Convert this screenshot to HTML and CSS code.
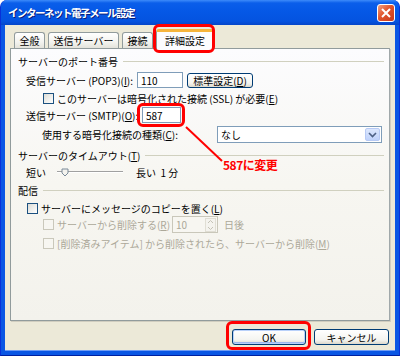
FILE: index.html
```html
<!doctype html>
<html>
    <head>
        <meta charset=utf-8>
        <title>インターネット電子メール設定</title>
        <link rel="stylesheet" href="styles.css">
    </head>
    <body>
        <div class="window">
            <div class="titlebar">
                <span class="title">インターネット電子メール設定</span>
                <span class="close">
                    <svg width="10" height="10" viewBox="0 0 10 10"><path d="M1 1L9 9M9 1L1 9" stroke="#fff" stroke-width="2"/></svg>
                </span>
            </div>

            <div class="client">
                <div class="tabs">
                    <span class="tab t-general">全般</span>
                    <span class="tab t-send">送信サーバー</span>
                    <span class="tab t-conn">接続</span>
                    <span class="tab t-adv active mark">詳細設定</span>
                </div>

                <div class="panel">
                    <div class="group g-port"><span>サーバーのポート番号</span></div>

                    <div class="row r-pop">
                        <label class="lbl l-pop">受信サーバー (POP3)(<u>I</u>):</label>
                        <span class="field f-pop">110</span>
                        <span class="btn b-std">標準設定(<u>D</u>)</span>
                    </div>

                    <div class="row r-ssl">
                        <span class="cb"></span>
                        <label>このサーバーは暗号化された接続 (SSL) が必要(<u>E</u>)</label>
                    </div>

                    <div class="row r-smtp">
                        <label class="lbl l-smtp">送信サーバー (SMTP)(<u>O</u>):</label>
                        <span class="field f-smtp mark">587</span>
                    </div>

                    <div class="row r-enc">
                        <label class="lbl l-enc">使用する暗号化接続の種類(<u>C</u>):</label>
                        <span class="select">
                            <span>なし</span>
                            <span class="drop">
                                <svg width="9" height="6" viewBox="0 0 9 6"><path d="M1 1L4.5 4.5L8 1" fill="none" stroke="#4D6185" stroke-width="1.6"/></svg>
                            </span>
                        </span>
                    </div>

                    <div class="group g-time"><span>サーバーのタイムアウト(<u>T</u>)</span></div>

                    <div class="row r-slider">
                        <span class="short">短い</span>
                        <svg class="slider" width="66" height="10" viewBox="0 0 66 10">
                            <line x1="0" y1="4.5" x2="66" y2="4.5" stroke="#A0A0A0"/>
                            <line x1="0" y1="5.5" x2="66" y2="5.5" stroke="#FFFFFF"/>
                            <path d="M5 2H11V6L8 9L5 6Z" fill="#F4F3EE" stroke="#7A8A99"/>
                        </svg>
                        <span class="long">長い&nbsp; 1 分</span>
                    </div>

                    <div class="group g-deliv"><span>配信</span></div>

                    <div class="row r-copy">
                        <span class="cb"></span>
                        <label>サーバーにメッセージのコピーを置く(<u>L</u>)</label>
                    </div>

                    <div class="row r-del disabled">
                        <span class="cb"></span>
                        <label class="l-del">サーバーから削除する(<u>R</u>)</label>
                        <span class="spin">
                            <span>10</span>
                            <span class="arrows">
                                <svg width="9" height="14" viewBox="0 0 9 14"><path d="M2 5L4.5 2.5L7 5M2 9L4.5 11.5L7 9" fill="none" stroke="#C4C2B6"/></svg>
                            </span>
                        </span>
                        <span class="days">日後</span>
                    </div>

                    <div class="row r-trash disabled">
                        <span class="cb"></span>
                        <label>[削除済みアイテム] から削除されたら、サーバーから削除(<u>M</u>)</label>
                    </div>
                </div>

                <div class="buttons">
                    <span class="btn b-ok mark">OK</span>
                    <span class="btn b-cancel">キャンセル</span>
                </div>
            </div>

            <svg class="pointer" width="400" height="356" viewBox="0 0 400 356">
                <line x1="185" y1="127" x2="221" y2="161" stroke="#FF0000" stroke-width="2"/>
            </svg>
            <span class="note">587に変更</span>
        </div>
    </body>
</html>
```

FILE: styles.css
```css
* {
    box-sizing: border-box;
}

body {
    margin: 0;
    font-family: "Noto Sans CJK JP", "Noto Sans", sans-serif;
    font-size: 10px;
    color: #000;
    background: #fff;
}

u {
    text-decoration: underline;
}

.window {
    position: relative;
    width: 400px;
    height: 356px;
    display: flex;
    flex-direction: column;
    padding: 0 4px 4px;
    background: #0A56E4;
    border-left: 1px solid #0831D9;
    border-right: 1px solid #0831D9;
    border-bottom: 1px solid #0020A0;
    border-radius: 7px 7px 0 0;
    overflow: hidden;
}

.titlebar {
    height: 25px;
    display: flex;
    align-items: center;
    justify-content: space-between;
    margin: 0 -4px;
    padding: 0 4px 0 7px;
    background: linear-gradient(#3D8BFA, #0A5EEA 12%, #0558E6 45%, #0453E0 85%, #0546C8);
}

.title {
    color: #fff;
    font-weight: bold;
    font-size: 10.5px;
    letter-spacing: -1.5px;
    text-shadow: 1px 1px 0 #0A1E7A;
}

.close {
    width: 18px;
    height: 18px;
    display: flex;
    align-items: center;
    justify-content: center;
    margin-top: 1px;
    border: 1px solid #fff;
    border-radius: 3px;
    background: linear-gradient(135deg, #F0A080, #E0542C 45%, #C8381A);
}

.client {
    flex: 1;
    display: flex;
    flex-direction: column;
    padding: 0 5px 0 5px;
    background: #ECE9D8;
    border-bottom: 1px solid #6F9CF5;
}

/* tabs */
.tabs {
    height: 23px;
    display: flex;
    align-items: flex-end;
    padding-left: 4px;
}

.tab {
    height: 16px;
    margin-right: 3px;
    display: flex;
    align-items: center;
    justify-content: center;
    border: 1px solid #919B9C;
    border-bottom: none;
    border-radius: 3px 3px 0 0;
    background: linear-gradient(#FFFFFF, #F3F3EF 60%, #E4E3DB);
}

.t-general { width: 31px; }
.t-send { width: 71px; }
.t-conn { width: 31px; }

.tab.active {
    width: 58px;
    height: 20px;
    margin-bottom: -1px;
    margin-left: 0;
    position: relative;
    z-index: 1;
    border-top: 3px solid #F7B53C;
    background: #FCFCFE;
}

.panel {
    height: 273px;
    border: 1px solid #919B9C;
    border-right-color: #A0A8AA;
    background: linear-gradient(#FCFCFE, #F7F6F1 50%, #F3F2EC);
    box-shadow: 1px 1px 0 #D0CDBF;
}

/* red marks */
.mark {
    position: relative;
}

.mark::after {
    content: "";
    position: absolute;
    border: 3px solid #FF0000;
    border-radius: 6px;
}

.tab.mark::after {
    top: -8px;
    right: -2px;
    bottom: -4px;
    left: -4px;
}

.f-smtp.mark::after {
    top: -5px;
    right: -5px;
    bottom: -5px;
    left: -6px;
}

.b-ok.mark::after {
    top: -9px;
    right: -6px;
    bottom: -6px;
    left: -7px;
}

/* rows */
.group {
    height: 14px;
    display: flex;
    align-items: center;
    padding: 0 5px 0 7px;
}

.group::after {
    content: "";
    flex: 1;
    margin-left: 5px;
    border-top: 1px solid #D0D0BF;
}

.row {
    display: flex;
    align-items: center;
}

.g-port { margin-top: 5px; }

.r-pop {
    height: 16px;
    margin-top: 4px;
    padding-left: 15px;
}

.lbl {
    flex-shrink: 0;
    white-space: nowrap;
}

.l-pop { width: 111px; }
.l-smtp { width: 116px; }
.l-enc { width: 175px; }

.field {
    height: 16px;
    display: flex;
    align-items: center;
    padding-left: 3px;
    border: 1px solid #7F9DB9;
    background: #fff;
}

.f-pop { width: 46px; }
.f-smtp { width: 39px; }

.btn {
    display: flex;
    align-items: center;
    justify-content: center;
    border: 1px solid #003C74;
    border-radius: 3px;
    background: linear-gradient(#FFFFFF, #F4F4F0 70%, #DCD8CC);
}

.b-std {
    width: 66px;
    height: 15px;
    margin-left: 4px;
}

.r-ssl {
    height: 14px;
    margin-top: 3px;
    padding-left: 32px;
}

.cb {
    width: 11px;
    height: 11px;
    margin-right: 3px;
    border: 1px solid #1C5180;
    background: linear-gradient(135deg, #DCDCD6, #FFFFFF);
}

.r-smtp {
    height: 16px;
    margin-top: 2px;
    padding-left: 15px;
}

.r-enc {
    height: 17px;
    margin-top: 3px;
    padding-left: 31px;
}

.select {
    width: 165px;
    height: 17px;
    display: flex;
    align-items: center;
    justify-content: space-between;
    padding: 0 1px 0 3px;
    border: 1px solid #7F9DB9;
    background: #fff;
}

.drop {
    width: 15px;
    height: 13px;
    display: flex;
    align-items: center;
    justify-content: center;
    border: 1px solid #B7CAF5;
    border-radius: 2px;
    background: linear-gradient(#DCE7FD, #BFD2FB);
}

.g-time { margin-top: 5px; }

.r-slider {
    height: 14px;
    margin-top: 3px;
    padding-left: 15px;
}

.short { width: 31px; }

.slider {
    margin-right: 13px;
}

.g-deliv { margin-top: 4px; }

.r-copy {
    height: 14px;
    margin-top: 4px;
    padding-left: 16px;
}

.disabled {
    color: #ACA899;
}

.disabled .cb {
    border-color: #CAC8BB;
    background: #F7F6F1;
}

.r-del {
    height: 17px;
    margin-top: 1px;
    padding-left: 32px;
}

.l-del { width: 115px; }

.spin {
    width: 46px;
    height: 17px;
    display: flex;
    align-items: center;
    justify-content: space-between;
    padding: 0 1px 0 3px;
    border: 1px solid #C9C7BA;
    background: #F7F6F1;
}

.arrows {
    width: 11px;
    height: 14px;
    display: flex;
    align-items: center;
    justify-content: center;
    border: 1px solid #E0DED4;
    background: #F4F3EE;
}

.days { margin-left: 6px; }

.r-trash {
    height: 14px;
    margin-top: 3px;
    padding-left: 32px;
}

/* dialog buttons */
.buttons {
    display: flex;
    justify-content: flex-end;
    gap: 8px;
    padding: 8px 1px 0 0;
}

.b-ok,
.b-cancel {
    height: 16px;
}

.b-ok {
    width: 74px;
    box-shadow: inset 0 0 0 1px #B9D1FA, inset 0 -1px 0 1px #9CB6EE;
}

.b-cancel { width: 75px; }

/* annotation */
.pointer {
    position: absolute;
    top: 0;
    left: 0;
    pointer-events: none;
}

.note {
    position: absolute;
    left: 222px;
    top: 156px;
    color: #FF0000;
    font-weight: bold;
    font-size: 12px;
    letter-spacing: -0.5px;
}
```
